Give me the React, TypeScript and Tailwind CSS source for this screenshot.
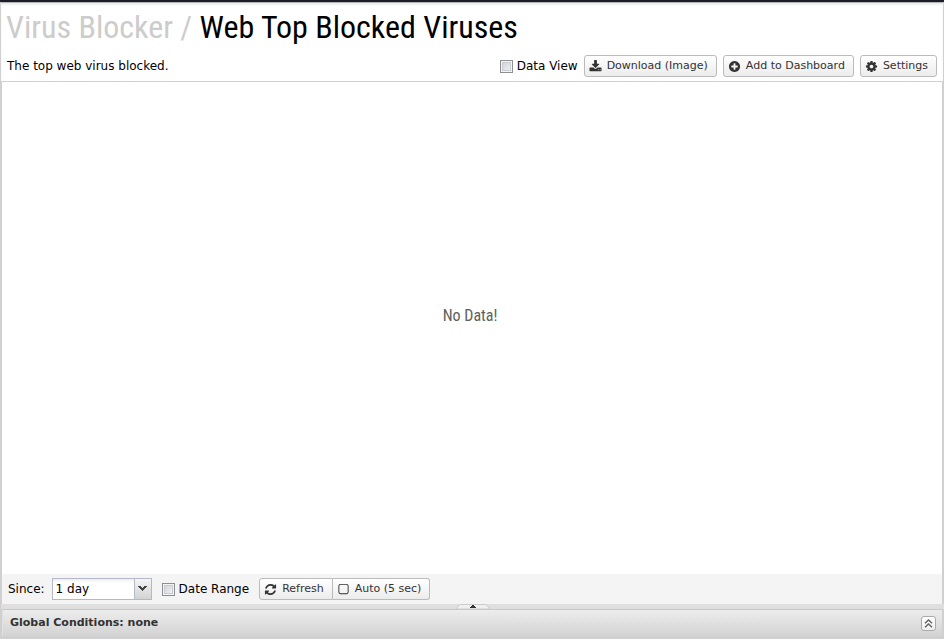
import { useState } from "react"
import type { ReactNode } from "react"

const icons = {
  download:
    "M1344 1344q0-26-19-45t-45-19-45 19-19 45 19 45 45 19 45-19 19-45zm256 0q0-26-19-45t-45-19-45 19-19 45 19 45 45 19 45-19 19-45zm128-224v320q0 40-28 68t-68 28h-1472q-40 0-68-28t-28-68v-320q0-40 28-68t68-28h465l135 136q58 56 136 56t136-56l136-136h464q40 0 68 28t28 68zm-325-569q17 41-14 70l-448 448q-18 19-45 19t-45-19l-448-448q-31-29-14-70 17-39 59-39h256v-448q0-26 19-45t45-19h256q26 0 45 19t19 45v448h256q42 0 59 39z",
  plus:
    "M1344 960v-128q0-26-19-45t-45-19h-256v-256q0-26-19-45t-45-19h-128q-26 0-45 19t-19 45v256h-256q-26 0-45 19t-19 45v128q0 26 19 45t45 19h256v256q0 26 19 45t45 19h128q26 0 45-19t19-45v-256h256q26 0 45-19t19-45zm320-64q0 209-103 385.5t-279.5 279.5-385.5 103-385.5-103-279.5-279.5-103-385.5 103-385.5 279.5-279.5 385.5-103 385.5 103 279.5 279.5 103 385.5z",
  cog:
    "M1152 896q0-106-75-181t-181-75-181 75-75 181 75 181 181 75 181-75 75-181zm512-109v222q0 12-8 23t-20 13l-185 28q-19 54-39 91 35 50 107 138 10 12 10 25t-9 23q-27 37-99 108t-94 71q-12 0-26-9l-138-108q-44 23-91 38-16 136-29 186-7 28-36 28h-222q-14 0-24.5-8.5t-11.5-21.5l-28-184q-49-16-90-37l-141 107q-10 9-25 9-14 0-25-11-126-114-165-168-7-10-7-23 0-12 8-23 15-21 51-66.5t54-70.5q-27-50-41-99l-183-27q-13-2-21-12.5t-8-23.5v-222q0-12 8-23t19-13l186-28q14-46 39-92-40-57-107-138-10-12-10-24 0-10 9-23 26-36 98.5-107.5t94.5-71.5q13 0 26 10l138 107q44-23 91-38 16-136 29-186 7-28 36-28h222q14 0 24.5 8.5t11.5 21.5l28 184q49 16 90 37l142-107q9-9 24-9 13 0 25 10 129 119 165 170 7 8 7 22 0 12-8 23-15 21-51 66.5t-54 70.5q26 50 41 98l183 28q13 2 21 12.5t8 23.5z",
  refresh:
    "M1639 1056q0 5-1 7-64 268-268 434.5t-478 166.5q-146 0-282.5-55t-243.5-157l-129 129q-19 19-45 19t-45-19-19-45v-448q0-26 19-45t45-19h448q26 0 45 19t19 45-19 45l-137 137q71 66 161 102t187 36q134 0 250-65t186-179q11-17 53-117 8-23 30-23h192q13 0 22.5 9.5t9.5 22.5zm25-800v448q0 26-19 45t-45 19h-448q-26 0-45-19t-19-45 19-45l138-138q-148-137-349-137-134 0-250 65t-186 179q-11 17-53 117-8 23-30 23h-199q-13 0-22.5-9.5t-9.5-22.5v-7q65-268 270-434.5t480-166.5q146 0 284 55.5t245 156.5l130-129q19-19 45-19t45 19 19 45z",
  square:
    "M1312 256h-832q-66 0-113 47t-47 113v832q0 66 47 113t113 47h832q66 0 113-47t47-113v-832q0-66-47-113t-113-47zm288 160v832q0 119-84.5 203.5t-203.5 84.5h-832q-119 0-203.5-84.5t-84.5-203.5v-832q0-119 84.5-203.5t203.5-84.5h832q119 0 203.5 84.5t84.5 203.5z",
}

function Icon({ name }: { name: keyof typeof icons }) {
  return (
    <svg className="size-[13px] shrink-0" viewBox="0 0 1792 1792" fill="currentColor" aria-hidden="true">
      <path d={icons[name]} />
    </svg>
  )
}

function ToolButton({ icon, shape = "rounded-[3px]", children }: { icon: keyof typeof icons; shape?: string; children: ReactNode }) {
  return (
    <button
      type="button"
      className={`flex h-[22px] items-center gap-[5px] border border-[#bbb] bg-linear-to-b from-white to-[#ececec] pr-2 pl-1 text-[11px] whitespace-nowrap text-[#333] ${shape}`}
    >
      <Icon name={icon} />
      <span>{children}</span>
    </button>
  )
}

function Check({ id, label }: { id: string; label: string }) {
  return (
    <div className="flex items-center gap-1">
      <input
        id={id}
        type="checkbox"
        className="size-[13px] shrink-0 appearance-none border border-[#8e8f8f] bg-linear-to-br from-[#cbcfd5] to-[#f6f6f6] shadow-[inset_0_0_0_1px_#f4f4f4,inset_0_0_0_2px_#c8cbd0] checked:from-[#5b6b80]"
      />
      <label htmlFor={id} className="whitespace-nowrap">{label}</label>
    </div>
  )
}

export default function App() {
  const [since, setSince] = useState("1 day")

  return (
    <div className="flex h-screen flex-col border-t-2 border-t-[#1b1d28] bg-white font-['DejaVu_Sans',sans-serif] text-[12px] text-black">
      <main className="flex min-h-0 flex-1 flex-col border-x border-x-[#d0d0d0]">
        <header className="border-t border-t-[#b5b5b5] bg-white shadow-[inset_0_2px_2px_#eeeeee]">
          <h1 className="px-[5px] pt-1 font-['Roboto_Condensed',Roboto,sans-serif] text-[32px] leading-10">
            <span className="text-[#ccc]">Virus Blocker / </span>Web Top Blocked Viruses
          </h1>
          <div className="flex h-[34px] items-center justify-between px-1.5 pt-1">
            <p>The top web virus blocked.</p>
            <div className="flex items-center gap-1.5">
              <Check id="data-view" label="Data View" />
              <ToolButton icon="download">Download (Image)</ToolButton>
              <ToolButton icon="plus">Add to Dashboard</ToolButton>
              <ToolButton icon="cog">Settings</ToolButton>
            </div>
          </div>
        </header>

        <section className="flex min-h-0 flex-1 flex-col border-x border-t border-[#d0d0d0]">
          <div className="flex flex-1 items-center justify-center pr-1 pb-6 font-['Roboto_Condensed',Roboto,sans-serif] text-[16px] text-[#606060]">
            No Data!
          </div>
          <div className="flex h-[30px] items-center bg-[#f4f4f4] px-1.5">
            <label htmlFor="since">Since:</label>
            <div className="relative mr-2.5 ml-[7px] flex h-[22px] w-[100px] border border-[#b5b8c8] bg-white">
              <select
                id="since"
                value={since}
                onChange={(e) => setSince(e.target.value)}
                className="w-full appearance-none bg-linear-to-b from-[#eee] to-white to-20% pl-[3px] outline-none"
              >
                <option>1 hour</option>
                <option>1 day</option>
                <option>1 week</option>
              </select>
              <span className="pointer-events-none absolute inset-y-0 right-0 flex w-[17px] items-center justify-center border-l border-[#b5b8c8] bg-linear-to-b from-[#f6f6f6] to-[#d2d2d2]">
                <svg width="9" height="6" viewBox="0 0 9 6" fill="#444" shapeRendering="crispEdges">
                  <path d="M0 0H3V1H4V2H5V1H6V0H9V1H8V2H7V3H6V4H5V5H4V4H3V3H2V2H1V1H0Z" />
                </svg>
              </span>
            </div>
            <Check id="date-range" label="Date Range" />
            <div className="ml-2.5 flex">
              <ToolButton icon="refresh" shape="rounded-l-[3px]">Refresh</ToolButton>
              <ToolButton icon="square" shape="rounded-r-[3px] border-l-0">Auto (5 sec)</ToolButton>
            </div>
          </div>
        </section>
      </main>

      <div className="flex h-[5px] justify-center border-l border-l-[#d0d0d0] bg-[#dfdfdf]">
        <svg width="34" height="5" viewBox="0 0 34 5" aria-hidden="true">
          <path d="M0 5L4 0.5H30L34 5Z" fill="#f0f0f0" stroke="#ccc" />
          <path d="M16 1H18V2H19V3H20V4H14V3H15V2H16Z" fill="#333" shapeRendering="crispEdges" />
        </svg>
      </div>

      <footer className="border-x-2 border-b-3 border-[#d0d0d0]">
        <div className="flex h-[27px] items-center justify-between border-t border-l border-t-[#c8c8c8] border-l-[#e0e0e0] bg-linear-to-b from-[#ededed] to-[#d3d3d3] pr-1.5 pl-[7px]">
          <h2 className="text-[11px] font-bold text-[#333]">Global Conditions: none</h2>
          <button type="button" aria-label="Expand" className="flex size-[15px] items-center justify-center rounded-[3px] border border-[#aaa] bg-linear-to-b from-white to-[#eee]">
            <svg width="9" height="9" viewBox="0 0 9 9" fill="none" stroke="#666" strokeWidth="1.5">
              <path d="M1 4.2L4.5 1L8 4.2M1 8.2L4.5 5L8 8.2" />
            </svg>
          </button>
        </div>
      </footer>
    </div>
  )
}
